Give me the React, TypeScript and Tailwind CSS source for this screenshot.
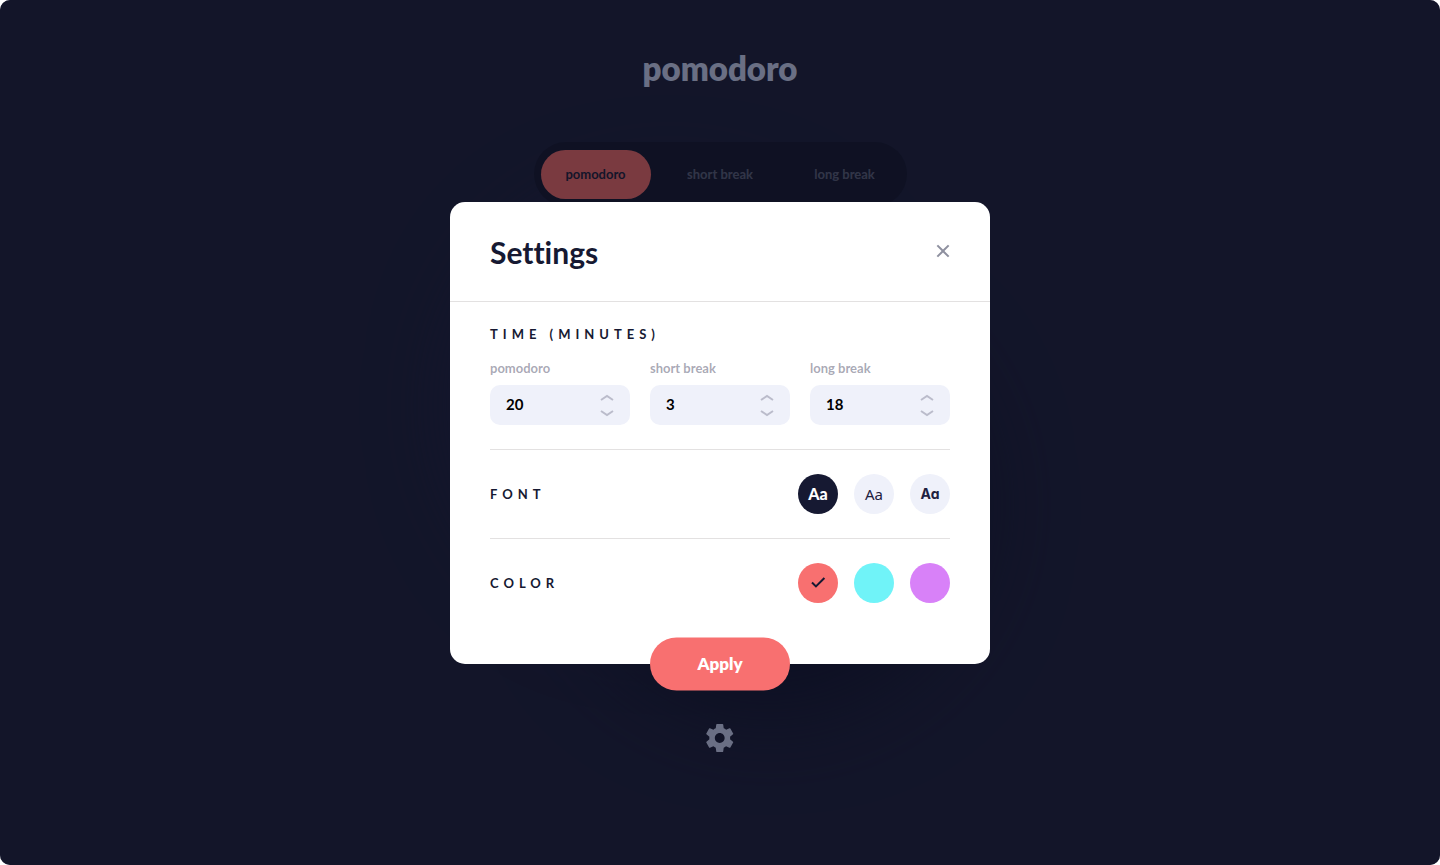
import { useState } from "react";

const tabs = ["pomodoro", "short break", "long break"];

const fonts = [
  { id: "sans", className: "font-['Lato',sans-serif] font-black text-base" },
  { id: "slab", className: "font-['Noto_Sans',sans-serif] font-normal text-[15px] pt-px" },
  { id: "mono", className: "font-['Inter',sans-serif] font-bold text-sm pt-px [font-feature-settings:'cv11','ss03']" },
];

const colors = [
  { id: "red", className: "bg-[#f87070]" },
  { id: "cyan", className: "bg-[#70f3f8]" },
  { id: "purple", className: "bg-[#d881f8]" },
];

function GearIcon() {
  return (
    <svg width="28" height="28" viewBox="0 0 28 28" fill="#d7e0ff" aria-hidden="true">
      <path d="M26.965 17.682l-2.927-2.317c.055-.448.097-.903.097-1.365 0-.462-.042-.917-.097-1.365l2.934-2.317a.702.702 0 00.167-.896l-2.775-4.851a.683.683 0 00-.847-.301l-3.454 1.407a10.506 10.506 0 00-2.345-1.379l-.52-3.71A.716.716 0 0016.503 0h-5.55a.703.703 0 00-.687.588l-.52 3.71c-.847.357-1.63.819-2.345 1.379L3.947 4.27a.691.691 0 00-.847.301L.325 9.422a.705.705 0 00.167.896l2.927 2.317c-.055.448-.097.903-.097 1.365 0 .462.042.917.097 1.365L.492 17.682a.702.702 0 00-.167.896L3.1 23.43a.683.683 0 00.847.301L7.4 22.324a10.506 10.506 0 002.345 1.379l.52 3.71c.056.329.34.587.687.587h5.55a.703.703 0 00.687-.588l.52-3.71c.847-.357 1.631-.819 2.346-1.379l3.454 1.407a.691.691 0 00.847-.301l2.775-4.851a.705.705 0 00-.167-.896zM13.73 18.9c-2.714 0-4.911-2.198-4.911-4.9s2.197-4.9 4.911-4.9c2.715 0 4.912 2.198 4.912 4.9s-2.197 4.9-4.912 4.9z" />
    </svg>
  );
}

function Chevron({ d }: { d: string }) {
  return (
    <svg width="14" height="7" viewBox="0 0 14 7" fill="none" stroke="#1e213f" strokeOpacity="0.25" strokeWidth="2" aria-hidden="true">
      <path d={d} />
    </svg>
  );
}

function TimeField({ id, label, initial }: { id: string; label: string; initial: number }) {
  const [value, setValue] = useState(initial);
  return (
    <div className="flex min-w-0 flex-1 flex-col">
      <label htmlFor={id} className="text-[13px] leading-4 font-bold text-[#1e213f]/40">
        {label}
      </label>
      <div className="mt-[9px] flex h-10 items-center rounded-[10px] bg-[#eff1fa] px-4">
        <input
          id={id}
          type="text"
          inputMode="numeric"
          value={value}
          onChange={(e) => setValue(Number(e.target.value) || 0)}
          className="w-full min-w-0 bg-transparent text-[15px] font-bold text-black outline-none"
        />
        <div className="flex flex-col gap-[9px] pt-px">
          <button type="button" aria-label={`Increase ${label}`} onClick={() => setValue(value + 1)}>
            <Chevron d="M1 6l6-4 6 4" />
          </button>
          <button type="button" aria-label={`Decrease ${label}`} onClick={() => setValue(Math.max(1, value - 1))}>
            <Chevron d="M1 1l6 4 6-4" />
          </button>
        </div>
      </div>
    </div>
  );
}

export default function App() {
  const [font, setFont] = useState("sans");
  const [color, setColor] = useState("red");

  return (
    <div className="relative min-h-screen overflow-hidden rounded-[10px] bg-[#1e213f] font-['Lato',sans-serif]">
      <main className="flex flex-col items-center pt-12">
        <h1 className="text-[33px] leading-10 font-extrabold text-[#d7e0ff]">pomodoro</h1>
        <nav className="relative z-10 mt-[54px] flex h-16 w-[373px] items-center justify-between rounded-full bg-[#161932] px-[7px]">
          {tabs.map((tab, i) => (
            <button
              key={tab}
              type="button"
              className={
                i === 0
                  ? "h-[49px] w-[110px] rounded-full bg-[#f87070] pt-0.5 text-[13px] font-bold text-[#1e213f]"
                  : "h-[49px] w-[110px] rounded-full pt-0.5 text-[13px] font-bold text-[#d7e0ff]/40"
              }
            >
              {tab}
            </button>
          ))}
        </nav>
        <div className="mt-11 size-[410px] rounded-full bg-linear-to-br from-[#0e112a] to-[#2e325a] shadow-[50px_50px_90px_#121530,-50px_-50px_90px_#20234a]" />
        <button type="button" aria-label="Open settings" className="mt-16">
          <GearIcon />
        </button>
      </main>

      <div className="absolute inset-0 z-20 flex items-center justify-center bg-[#090b16]/[53%]">
        <section role="dialog" aria-labelledby="settings-title" className="relative w-full max-w-[540px] rounded-[15px] bg-white pb-[61px] text-[#161932]">
          <header className="flex h-[100px] items-center justify-between border-b border-[#e3e1e1] px-10">
            <h2 id="settings-title" className="pt-0.5 text-3xl leading-9 font-bold [font-variant-ligatures:none]">
              Settings
            </h2>
            <button type="button" aria-label="Close settings">
              <svg width="14" height="14" viewBox="0 0 14 14" fill="#1e213f" fillOpacity="0.5" aria-hidden="true">
                <path d="M11.95.636l1.414 1.414L8.414 7l4.95 4.95-1.414 1.414L7 8.414l-4.95 4.95L.636 11.95 5.586 7 .636 2.05 2.05.636 7 5.586l4.95-4.95z" />
              </svg>
            </button>
          </header>

          <form className="px-10" onSubmit={(e) => e.preventDefault()}>
            <div className="border-b border-[#e3e1e1] pt-6 pb-6">
              <h3 className="text-[13px] leading-4 font-bold tracking-[5px]">TIME (MINUTES)</h3>
              <div className="mt-[18px] flex gap-5">
                <TimeField id="time-pomodoro" label="pomodoro" initial={20} />
                <TimeField id="time-short" label="short break" initial={3} />
                <TimeField id="time-long" label="long break" initial={18} />
              </div>
            </div>

            <div className="flex items-center justify-between border-b border-[#e3e1e1] py-6">
              <h3 className="text-[13px] leading-4 font-bold tracking-[5px]">FONT</h3>
              <div className="flex gap-4">
                {fonts.map((f) => (
                  <button
                    key={f.id}
                    type="button"
                    aria-pressed={font === f.id}
                    onClick={() => setFont(f.id)}
                    className={`size-10 rounded-full ${f.className} ${
                      font === f.id ? "bg-[#161932] text-white" : "bg-[#eff1fa] text-[#1e213f]"
                    }`}
                  >
                    Aa
                  </button>
                ))}
              </div>
            </div>

            <div className="flex items-center justify-between pt-6">
              <h3 className="text-[13px] leading-4 font-bold tracking-[5px]">COLOR</h3>
              <div className="flex gap-4">
                {colors.map((c) => (
                  <button
                    key={c.id}
                    type="button"
                    aria-label={c.id}
                    aria-pressed={color === c.id}
                    onClick={() => setColor(c.id)}
                    className={`flex size-10 items-center justify-center rounded-full ${c.className}`}
                  >
                    {color === c.id && (
                      <svg width="15" height="11" viewBox="0 0 15 11" fill="none" stroke="#161932" strokeWidth="2" aria-hidden="true">
                        <path d="M1 5.5l3.95 3.95L13.4 1" />
                      </svg>
                    )}
                  </button>
                ))}
              </div>
            </div>

            <button
              type="submit"
              className="absolute bottom-0 left-1/2 h-[53px] w-[140px] -translate-x-1/2 translate-y-1/2 rounded-full bg-[#f87070] text-[17px] font-extrabold text-white"
            >
              Apply
            </button>
          </form>
        </section>
      </div>
    </div>
  );
}
